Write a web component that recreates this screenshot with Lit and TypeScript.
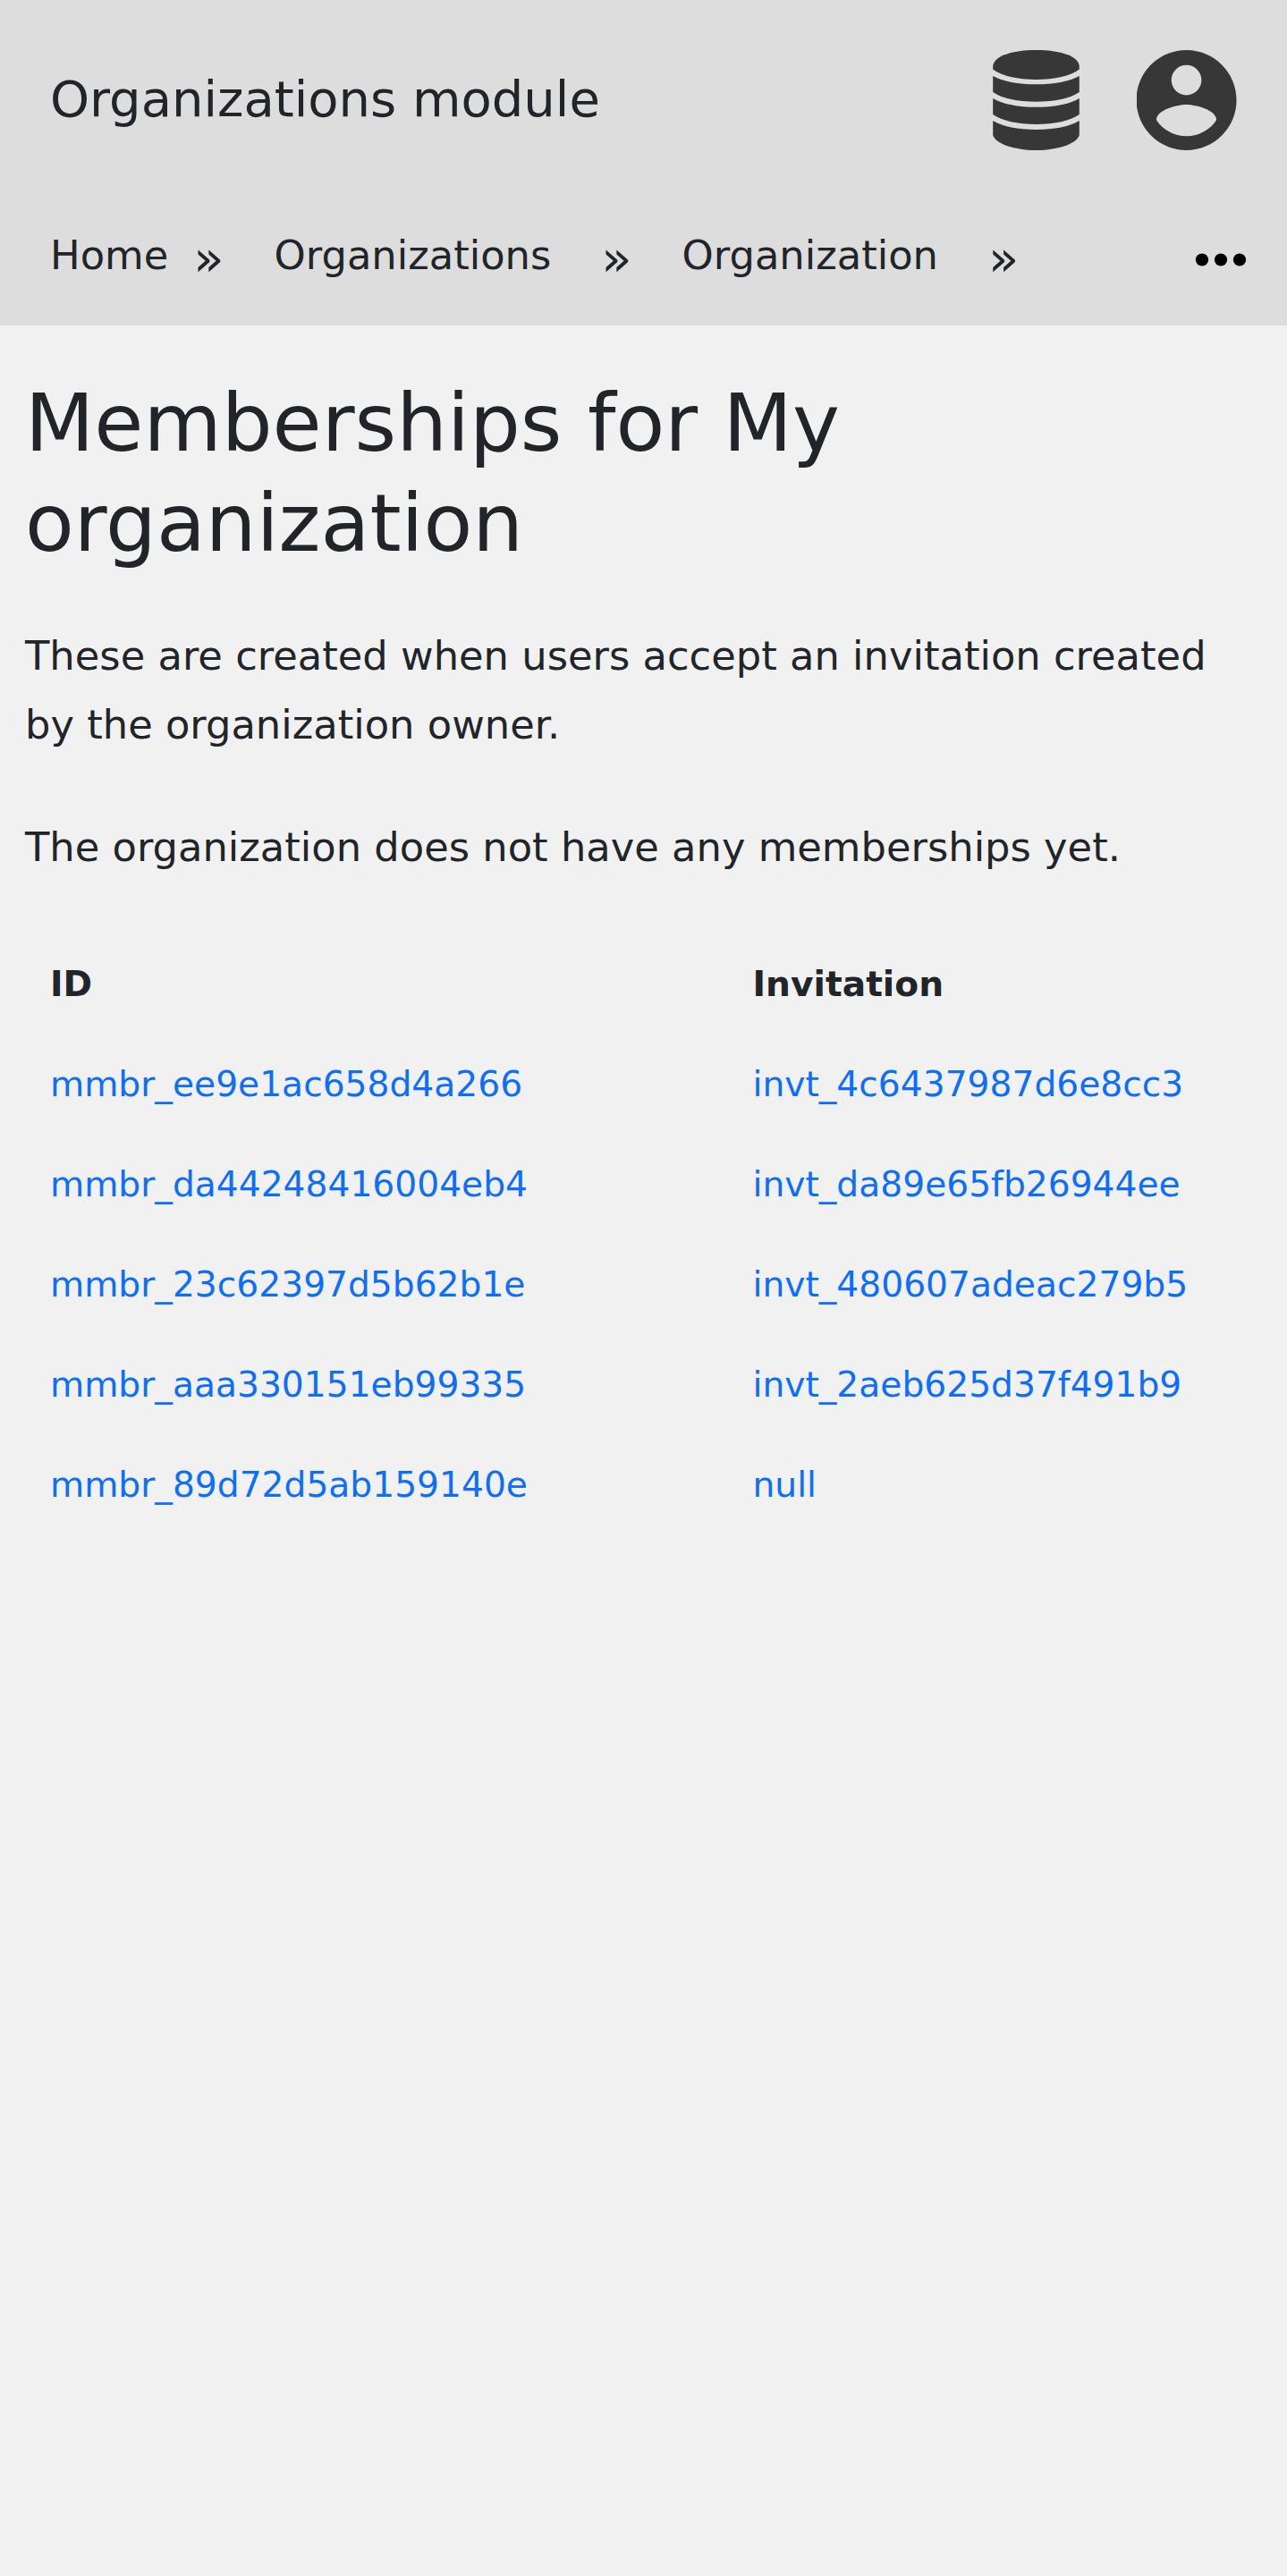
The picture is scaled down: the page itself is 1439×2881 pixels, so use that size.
import { LitElement, html, css } from "lit";
import { customElement } from "lit/decorators.js";

const CRUMBS = ["Home", "Organizations", "Organization"];

const ROWS: [string, string][] = [
  ["mmbr_ee9e1ac658d4a266", "invt_4c6437987d6e8cc3"],
  ["mmbr_da44248416004eb4", "invt_da89e65fb26944ee"],
  ["mmbr_23c62397d5b62b1e", "invt_480607adeac279b5"],
  ["mmbr_aaa330151eb99335", "invt_2aeb625d37f491b9"],
  ["mmbr_89d72d5ab159140e", "null"],
];

@customElement("app-root")
export class AppRoot extends LitElement {
  static styles = css`
    :host {
      display: block;
      box-sizing: border-box;
      min-height: 100vh;
      background: #f1f1f1;
      color: #212529;
      font-family: "DejaVu Sans", sans-serif;
      font-size: 44.8px;
    }
    a { text-decoration: none; color: inherit; }
    svg { display: block; }
    .header { height: 364px; background: #ddd; }
    .bar {
      display: flex;
      align-items: center;
      gap: 56px;
      height: 224px;
      box-sizing: border-box;
      padding: 0 56px;
    }
    .title { flex: 1; font-size: 56px; line-height: 84px; padding-bottom: 3px; }
    .icon { width: 112px; height: 112px; fill: #373737; }
    .crumbs {
      display: flex;
      align-items: baseline;
      padding: 15.5px 46px 0 56px;
      line-height: 84px;
    }
    .crumb::after {
      content: "»";
      font-size: 56px;
      line-height: 84px;
      display: inline-block;
      transform: translateY(7px);
      margin: 0 56px;
    }
    .crumb:first-child::after { margin-left: 28px; }
    .more {
      margin: 43.5px 0 0 auto;
      width: 56px;
      height: 15px;
      align-self: flex-start;
      overflow: visible;
    }
    .content { padding: 53px 28px 0; }
    h1 { margin: 0; font-size: 89.6px; line-height: 112px; font-weight: 400; }
    p { margin: 0 0 60px; line-height: 77px; }
    .intro { margin-top: 54px; }
    .status { margin-bottom: 59px; }
    table {
      width: 1383px;
      border-collapse: collapse;
      table-layout: fixed;
      font-size: 39.2px;
      line-height: 56px;
    }
    th, td { padding: 28px; text-align: left; }
    .first { width: 729.5px; }
    td a { color: #0d6efd; }
  `;

  render() {
    return html`
      <header class="header">
        <div class="bar">
          <div class="title">Organizations module</div>
          <svg class="icon" viewBox="0.5 0 112 112">
            <path d="M7.7 18.5C7.7 8 26 0 56 0S104.3 8 104.3 18.5V21.5C94 29 77 33 56 33S18 29 7.7 21.5Z" />
            <path d="M7.7 29C18 35 36 38.3 56 38.3S94 35 104.3 29V47C94 54 77 57.8 56 57.8S18 54 7.7 47Z" />
            <path d="M7.7 54C18 60.5 36 63.8 56 63.8S94 60.5 104.3 54V72C94 79 77 83 56 83S18 79 7.7 72Z" />
            <path d="M7.7 79C18 85.5 36 89 56 89S94 85.5 104.3 79V95C102 104 82 112 56 112S10 104 7.7 95Z" />
          </svg>
          <svg class="icon" viewBox="2.08 2 20 20">
            <path d="M12 2C6.48 2 2 6.48 2 12s4.48 10 10 10 10-4.48 10-10S17.52 2 12 2zm0 3c1.66 0 3 1.34 3 3s-1.34 3-3 3-3-1.34-3-3 1.34-3 3-3zm0 14.2c-2.5 0-4.71-1.28-6-3.22.03-1.99 4-3.08 6-3.08 1.99 0 5.97 1.09 6 3.08-1.29 1.94-3.5 3.22-6 3.22z" />
          </svg>
        </div>
        <nav class="crumbs">
          ${CRUMBS.map((c) => html`<a class="crumb">${c}</a>`)}
          <svg class="more" viewBox="0 0 56 15">
            <circle cx="7" cy="7.5" r="7.1" />
            <circle cx="28" cy="7.5" r="7.1" />
            <circle cx="49" cy="7.5" r="7.1" />
          </svg>
        </nav>
      </header>
      <main class="content">
        <h1>Memberships for My organization</h1>
        <p class="intro">These are created when users accept an invitation created by the organization owner.</p>
        <p class="status">The organization does not have any memberships yet.</p>
        <table>
          <thead><tr><th class="first">ID</th><th>Invitation</th></tr></thead>
          <tbody>
            ${ROWS.map(([id, inv]) => html`<tr><td><a>${id}</a></td><td><a>${inv}</a></td></tr>`)}
          </tbody>
        </table>
      </main>
    `;
  }
}
